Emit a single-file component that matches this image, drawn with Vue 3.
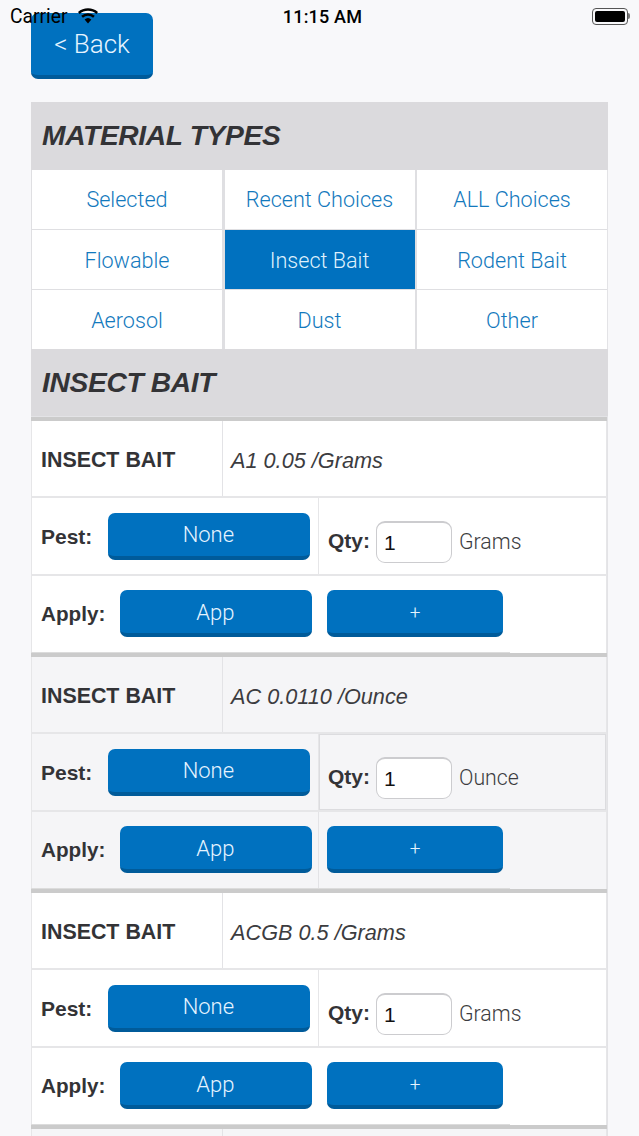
<script setup>
const tabs = [
  { label: 'Selected' }, { label: 'Recent Choices' }, { label: 'ALL Choices' },
  { label: 'Flowable' }, { label: 'Insect Bait', active: true }, { label: 'Rodent Bait' },
  { label: 'Aerosol' }, { label: 'Dust' }, { label: 'Other' }
]
const items = [
  { name: 'A1 0.05 /Grams', unit: 'Grams' },
  { name: 'AC 0.0110 /Ounce', unit: 'Ounce', alt: true },
  { name: 'ACGB 0.5 /Grams', unit: 'Grams' }
]
</script>

<template>
  <div class="page">
    <div class="status">
      <div class="status-left">
        <span class="carrier">Carrier</span>
        <svg class="wifi" width="22" height="16" viewBox="0 0 22 16">
          <path d="M11 15.5 7.6 11.6a5 5 0 0 1 6.8 0z" fill="#000" />
          <path d="M5.9 9.7a7.8 7.8 0 0 1 10.2 0l1.7-1.9a10.4 10.4 0 0 0-13.6 0z" fill="#000" />
          <path d="M2.6 6a12.7 12.7 0 0 1 16.8 0l1.6-1.9A15.2 15.2 0 0 0 1 4.1z" fill="#000" />
        </svg>
      </div>
      <span class="clock">11:15 AM</span>
      <div class="battery">
        <span class="battery-body"><span class="battery-fill"></span></span>
        <span class="battery-tip"></span>
      </div>
    </div>

    <button class="btn back">&lt; Back</button>

    <section class="panel">
      <h2 class="band first-band">MATERIAL TYPES</h2>
      <div class="tabs">
        <div v-for="t in tabs" :key="t.label" class="tab" :class="{ active: t.active }">{{ t.label }}</div>
      </div>
      <h2 class="band">INSECT BAIT</h2>
      <div class="rule top-rule"><span class="rule-lead"></span></div>

      <div v-for="item in items" :key="item.name" class="item" :class="{ alt: item.alt }">
        <div class="row row-head">
          <div class="cell-name">INSECT BAIT</div>
          <div class="cell-desc">{{ item.name }}</div>
        </div>
        <div class="row row-mid">
          <div class="cell-half pest">
            <span class="label">Pest:</span>
            <button class="btn none">None</button>
          </div>
          <div class="cell-half qty">
            <span class="label">Qty:</span>
            <div class="input">1</div>
            <span class="unit">{{ item.unit }}</span>
          </div>
        </div>
        <div class="row row-foot">
          <div class="cell-half apply">
            <span class="label apply-label">Apply:</span>
            <button class="btn app">App</button>
          </div>
          <div class="cell-half add">
            <button class="btn plus">+</button>
          </div>
        </div>
        <div class="rule"><span class="rule-lead"></span></div>
      </div>
      <div class="item alt tail">
        <div class="row tail-row"><div class="cell-name"></div></div>
      </div>
    </section>
  </div>
</template>

<style>
html, body { margin: 0; background: #f8f8fa; }
</style>

<style scoped>
.page {
  position: relative;
  width: 639px;
  height: 1136px;
  overflow: hidden;
  box-sizing: border-box;
  padding: 13px 31px 0;
  background: #f8f8fa;
  font-family: "Liberation Sans", Arial, sans-serif;
  color: #333336;
}
.status {
  position: absolute;
  z-index: 2;
  top: 5px;
  left: 10px;
  right: 9px;
  height: 22px;
  display: grid;
  grid-template-columns: 1fr auto 1fr;
  align-items: center;
  font-family: Roboto, "Liberation Sans", sans-serif;
  font-size: 18px;
  color: #000;
}
.status-left { display: flex; align-items: center; gap: 9px; }
.carrier { font-size: 19.3px; }
.wifi { margin-top: -1px; }
.clock { font-weight: 500; letter-spacing: 0.2px; margin-left: 5px; }
.battery { justify-self: end; display: flex; align-items: center; margin-top: -1px; }
.battery-body {
  box-sizing: border-box;
  width: 36px;
  height: 17px;
  padding: 2px;
  border: 1px solid #555;
  border-radius: 4px;
  display: block;
}
.battery-fill { display: block; height: 100%; background: #000; border-radius: 2px; }
.battery-tip { width: 2px; height: 6px; background: #777; border-radius: 0 2px 2px 0; }

.btn {
  display: block;
  box-sizing: border-box;
  margin: 0;
  padding: 0 2px 1px 0;
  border: 0;
  border-bottom: 4px solid #005b9a;
  border-radius: 7px;
  background: #0071bf;
  color: #e6f4ff;
  font-family: Roboto, "Liberation Sans", sans-serif;
  font-weight: 300;
  font-size: 22px;
  text-align: center;
}
.back { width: 122px; height: 66px; font-size: 26px; padding: 0; }

.panel {
  width: 577px;
  margin-top: 23px;
  background: #e3e3e6;
}
.band {
  margin: 0;
  box-sizing: border-box;
  height: 67px;
  padding: 15px 0 0 11px;
  background: #dbdadd;
  font-size: 28.2px;
  line-height: 36px;
  font-weight: 700;
  font-style: italic;
  color: #333336;
  letter-spacing: -0.35px;
}
.first-band { height: 68px; }
.tabs {
  display: grid;
  grid-template-columns: 190px 190px 190px;
  grid-auto-rows: 59px;
  column-gap: 2.5px;
  row-gap: 1px;
  padding: 0 1px 1px;
  box-sizing: border-box;
  width: 576px;
  margin-bottom: -1px;
  background: #dfdfe2;
}
.tab {
  display: flex;
  align-items: center;
  justify-content: center;
  background: #fff;
  color: #1379bd;
  font-family: Roboto, "Liberation Sans", sans-serif;
  font-weight: 300;
  font-size: 21.6px;
}
.tab:nth-child(n + 4) { padding-top: 2px; box-sizing: border-box; }
.tab.active { background: #0071bf; color: #dff0fc; }
.rule {
  position: relative;
  height: 4px;
  background: #cbcbcb;
  width: 576px;
}
.top-rule { margin-top: 1px; }
.rule-lead {
  position: absolute;
  left: 0;
  top: -1px;
  width: 479px;
  height: 1px;
  background: #dcdcdc;
}
.top-rule .rule-lead { display: none; }
.item {
  background: #fff;
  width: 576px;
  border-left: 1px solid #e6e6e8;
  border-right: 1px solid #e6e6e8;
  box-sizing: border-box;
}
.item .rule { width: 576px; margin-left: -1px; }
.item.alt { background: #f5f5f7; }
.row {
  display: flex;
  box-sizing: border-box;
  border-bottom: 2px solid #e6e6e8;
}
.row-head { height: 77px; }
.row-mid { height: 78px; }
.row-foot { height: 77px; border-bottom: 0; }
.tail-row { height: 20px; border-bottom: 0; }
.tail { height: 20px; }
.cell-name {
  box-sizing: border-box;
  width: 191px;
  padding: 3px 0 0 9px;
  display: flex;
  align-items: center;
  border-right: 1px solid #e3e3e6;
  font-size: 21.4px;
  font-weight: 700;
  color: #333336;
}
.cell-desc {
  flex: 1;
  padding: 4px 0 0 8px;
  display: flex;
  align-items: center;
  font-size: 21.7px;
  font-style: italic;
  color: #3c3c3f;
}
.cell-half {
  box-sizing: border-box;
  display: flex;
  align-items: center;
}
.pest, .apply {
  width: 287px;
  padding-left: 9px;
  border-right: 1px solid #e6e6e8;
}
.apply { border-right: 0; }
.alt .apply { border-right: 1px solid #e3e3e6; }
.label {
  font-size: 21px;
  font-weight: 700;
  color: #333336;
  white-space: nowrap;
}
.pest .label { margin-top: 2px; }
.apply-label { font-size: 20.7px; margin-top: -2px; }
.none { width: 202px; height: 47px; margin: 1px 0 0 16px; }
.qty { flex: 1; padding: 10px 0 0 9px; }
.alt .qty { outline: 1px solid #dcdcdf; outline-offset: -1px; }
.input {
  box-sizing: border-box;
  width: 76px;
  height: 42px;
  margin: 1px 0 0 6px;
  padding: 2px 0 0 7px;
  display: flex;
  align-items: center;
  background: #fff;
  border: 1.5px solid #cccccf;
  border-top-width: 2px;
  border-radius: 9px;
  font-size: 21px;
  color: #111;
}
.unit {
  margin-left: 7px;
  font-family: Roboto, "Liberation Sans", sans-serif;
  font-size: 21.3px;
  font-weight: 300;
  color: #3c3c3f;
}
.app { width: 192px; height: 47px; margin: -3px 0 0 15px; padding: 2px 2px 0 0; }
.add { flex: 1; padding-left: 8px; }
.plus { width: 176px; height: 47px; margin-top: -3px; font-size: 19px; padding: 2px 0 0; }
</style>
